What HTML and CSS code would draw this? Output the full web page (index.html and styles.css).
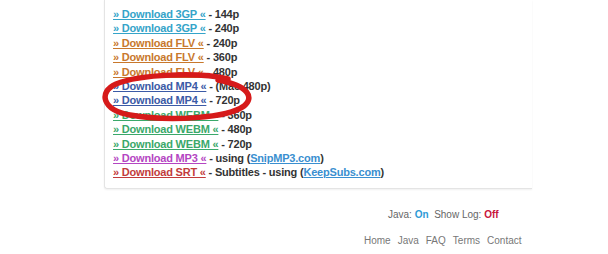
FILE: index.html
```html
<!DOCTYPE html>
<html lang="en">
<head>
  <meta charset="UTF-8" />
  <title>Download links</title>
  <link rel="stylesheet" href="styles.css">
</head>
<body>
  <div class="wrap">
    <div class="links">
      <div class="row"><a class="c3gp" href="#">&raquo; Download 3GP &laquo;</a> - 144p</div>
      <div class="row"><a class="c3gp" href="#">&raquo; Download 3GP &laquo;</a> - 240p</div>
      <div class="row"><a class="cflv" href="#">&raquo; Download FLV &laquo;</a> - 240p</div>
      <div class="row"><a class="cflv" href="#">&raquo; Download FLV &laquo;</a> - 360p</div>
      <div class="row"><a class="cflv" href="#">&raquo; Download FLV &laquo;</a> - 480p</div>
      <div class="row"><a class="cmp4" href="#">&raquo; Download MP4 &laquo;</a> - (Mac 480p)</div>
      <div class="row"><a class="cmp4" href="#">&raquo; Download MP4 &laquo;</a> - 720p</div>
      <div class="row"><a class="cwebm" href="#">&raquo; Download WEBM &laquo;</a> - 360p</div>
      <div class="row"><a class="cwebm" href="#">&raquo; Download WEBM &laquo;</a> - 480p</div>
      <div class="row"><a class="cwebm" href="#">&raquo; Download WEBM &laquo;</a> - 720p</div>
      <div class="row"><a class="cmp3" href="#">&raquo; Download MP3 &laquo;</a> - using (<a class="ext" href="#">SnipMP3.com</a>)</div>
      <div class="row"><a class="csrt" href="#">&raquo; Download SRT &laquo;</a> - Subtitles - using (<a class="ext" href="#">KeepSubs.com</a>)</div>
    </div>

    <!-- hand drawn marker round the 720p mp4 row -->
    <svg class="circle" width="156" height="52" viewBox="0 0 156 52">
      <path d="M128 7 C100 0 40 2 16 12 C-2 20 2 38 30 43 C70 50 128 46 144 34 C154 26 150 14 118 8"
            fill="none" stroke="#d61a1a" stroke-width="5.5" stroke-linecap="round" />
    </svg>
  </div>

  <div class="status">Java: <b class="on">On</b>&nbsp; Show Log: <b class="off">Off</b></div>
  <div class="nav">
    <a href="#">Home</a>
    <a href="#">Java</a>
    <a href="#">FAQ</a>
    <a href="#">Terms</a>
    <a href="#">Contact</a>
  </div>
</body>
</html>
```

FILE: styles.css
```css
body {
  margin: 0;
  background: #fff;
  font-family: "Liberation Sans", Arial, sans-serif;
  color: #666;
}
.wrap {
  position: relative;
  width: 428px;
  margin-left: 104px;
}
.links {
  border-left: 1px solid #e4e4e4;
  border-bottom: 1px solid #e4e4e4;
  border-bottom-left-radius: 3px;
  box-shadow: 0 1px 2px #f0f0f0;
  padding: 7px 0 8px 8px;
  font-size: 11px;
  font-weight: bold;
  letter-spacing: -0.2px;
  color: #333;
}
.row {
  height: 14.4px;
  line-height: 14.4px;
  white-space: nowrap;
}
.row a {
  text-decoration: underline;
}
.c3gp { color: #35a4c9; }
.cflv { color: #c8782c; }
.cmp4 { color: #3b5aa6; }
.cwebm { color: #3aa86a; }
.cmp3 { color: #b445c2; }
.csrt { color: #c23b3b; }
.ext { color: #3a8fd0; }
.circle {
  position: absolute;
  left: -4px;
  top: 72px;
}
.status {
  margin-top: 19px;
  padding-left: 388px;
  font-size: 10px;
  line-height: 14px;
}
.on { color: #2f9ad6; }
.off { color: #c8143c; }
.nav {
  margin-top: 12px;
  padding-left: 364px;
  font-size: 10px;
  line-height: 14px;
  display: flex;
  gap: 7px;
}
.nav a {
  color: #777;
  text-decoration: none;
}
```
